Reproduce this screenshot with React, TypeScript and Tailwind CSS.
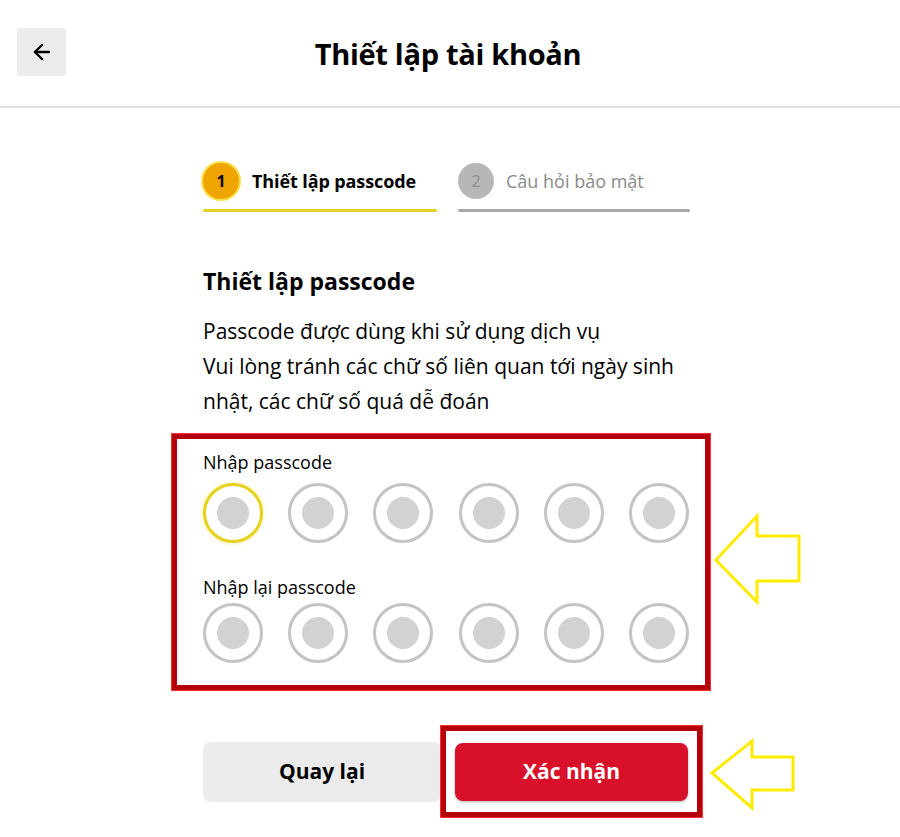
import React from 'react';
import { ArrowLeft } from 'lucide-react';

const PinRow: React.FC<{ activeFirst?: boolean }> = ({ activeFirst }) => (
  <div className="flex justify-between">
    {[0, 1, 2, 3, 4, 5].map((i) => (
      <div
        key={i}
        className={
          i === 0 && activeFirst
            ? 'w-[60px] h-[60px] rounded-full border-[3px] border-[#e4d21c] shadow-[0_0_4px_#f5ec8a] flex items-center justify-center'
            : 'w-[60px] h-[60px] rounded-full border-[3px] border-[#c4c4c4] flex items-center justify-center'
        }
      >
        <div className="w-[32px] h-[32px] rounded-full bg-[#d2d2d2]" />
      </div>
    ))}
  </div>
);

export default function App() {
  return (
    <div
      className="relative w-[900px] h-[837px] bg-white overflow-hidden text-black"
      style={{ fontFamily: '"Open Sans", "Noto Sans", sans-serif' }}
    >
      {/* Header */}
      <header className="h-[108px] grid grid-cols-[1fr_auto_1fr] items-center border-b-2 border-[#e2e2e2] px-[17px]">
        <div className="flex">
          <button className="w-[49px] h-[48px] bg-[#ebebeb] rounded-[3px] flex items-center justify-center -mt-[2px]">
            <ArrowLeft className="w-[24px] h-[24px]" strokeWidth={2.4} />
          </button>
        </div>
        <h1 className="text-[29px] font-bold tracking-[-0.3px] mt-[1px] -ml-[4px]">Thiết lập tài khoản</h1>
        <div />
      </header>

      <main className="ml-[203px] w-[487px]">
        {/* Stepper */}
        <div className="mt-[55px] flex gap-[21px]">
          <div className="w-[234px] flex flex-col">
            <div className="flex items-center gap-[13px]">
              <div className="w-[36px] h-[36px] rounded-full bg-[#f0a400] ring-2 ring-[#f8e04a] flex items-center justify-center text-[16px] font-bold">
                1
              </div>
              <span className="text-[18px] font-bold tracking-[-0.1px]">Thiết lập passcode</span>
            </div>
            <div className="mt-[10px] h-[3px] bg-[#e6d41e] rounded-full" />
          </div>
          <div className="w-[232px] flex flex-col">
            <div className="flex items-center gap-[12px]">
              <div className="w-[36px] h-[36px] rounded-full bg-[#b7b7b7] flex items-center justify-center text-[16px] text-[#8c8c8c]">
                2
              </div>
              <span className="text-[18px] text-[#8a8a8a]">Câu hỏi bảo mật</span>
            </div>
            <div className="mt-[10px] h-[3px] bg-[#a9a9a9] rounded-full" />
          </div>
        </div>

        {/* Title + description */}
        <h2 className="mt-[54px] text-[23px] font-bold leading-[30px]">Thiết lập passcode</h2>
        <p className="mt-[18px] text-[21px] leading-[35px]">
          Passcode được dùng khi sử dụng dịch vụ
          <br />
          Vui lòng tránh các chữ số liên quan tới ngày sinh
          <br />
          nhật, các chữ số quá dễ đoán
        </p>

        {/* Passcode inputs (highlighted) */}
        <div className="mt-[15px] -ml-[31px] w-[538px] h-[256px] border-[5px] border-[#b3000a] outline outline-1 outline-[#ff3030] pl-[26px] pr-[16px] pt-[10px]">
          <div className="text-[18px] leading-[26px]">Nhập passcode</div>
          <div className="mt-[8px]">
            <PinRow activeFirst />
          </div>
          <div className="mt-[31px] text-[18px] leading-[26px]">Nhập lại passcode</div>
          <div className="mt-[3px]">
            <PinRow />
          </div>
        </div>

        {/* Buttons */}
        <div className="mt-[36px] flex items-center">
          <button className="shrink-0 w-[238px] h-[60px] rounded-[8px] bg-[#ebebeb] text-[21px] font-bold">
            Quay lại
          </button>
          <div className="shrink-0 w-[261px] h-[91px] border-[5px] border-[#b3000a] outline outline-1 outline-[#ff3030] pl-[9px] pt-[12px]">
            <button className="w-[233px] h-[58px] rounded-[8px] bg-[#d8102a] text-white text-[21px] font-bold shadow-[0_1px_3px_rgba(0,0,0,0.3)]">
              Xác nhận
            </button>
          </div>
        </div>
      </main>

      {/* Annotation arrows */}
      <svg className="absolute inset-0 pointer-events-none" width="900" height="837" viewBox="0 0 900 837">
        <polygon
          points="716,560 757,516 757,536 799,536 799,581 757,581 757,602"
          fill="none"
          stroke="#ffeb00"
          strokeWidth="3"
        />
        <polygon
          points="712,773 752,741 752,757 793,757 793,790 752,790 752,808"
          fill="none"
          stroke="#ffeb00"
          strokeWidth="3"
        />
      </svg>
    </div>
  );
}
